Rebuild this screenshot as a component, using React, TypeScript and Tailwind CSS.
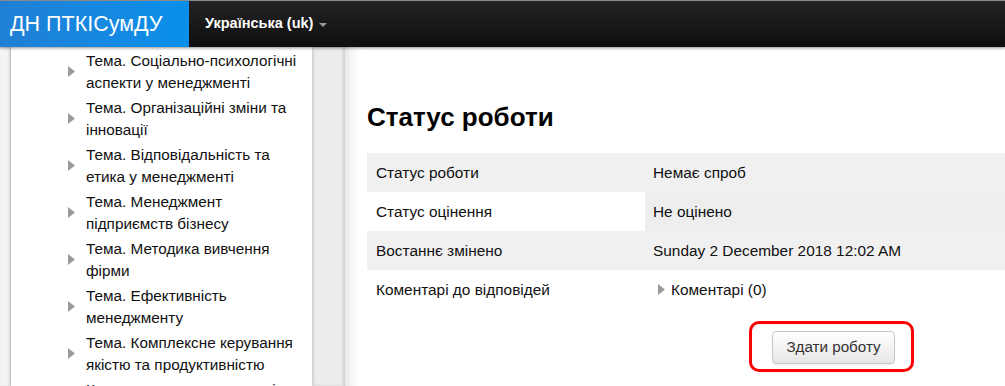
const topics = [
  ["Тема. Соціально-психологічні", "аспекти у менеджменті"],
  ["Тема. Організаційні зміни та", "інновації"],
  ["Тема. Відповідальність та", "етика у менеджменті"],
  ["Тема. Менеджмент", "підприємств бізнесу"],
  ["Тема. Методика вивчення", "фірми"],
  ["Тема. Ефективність", "менеджменту"],
  ["Тема. Комплексне керування", "якістю та продуктивністю"],
  ["Контроль знань з дисципліни", "менеджмент"],
];

// Small grey triangle used by the tree items
function Arrow() {
  return (
    <svg width="7" height="11" viewBox="0 0 7 11" className="shrink-0">
      <path d="M0 0 L7 5.5 L0 11 Z" fill="#9a9a9a" />
    </svg>
  );
}

const rows: { label: string; value: React.ReactNode; bg: string; valueBg: string }[] = [
  { label: "Статус роботи", value: "Немає спроб", bg: "bg-[#f0f0f0]", valueBg: "bg-[#f0f0f0]" },
  { label: "Статус оцінення", value: "Не оцінено", bg: "bg-white", valueBg: "bg-[#eeeeee]" },
  {
    label: "Востаннє змінено",
    value: "Sunday 2 December 2018 12:02 AM",
    bg: "bg-[#f0f0f0]",
    valueBg: "bg-[#f0f0f0]",
  },
  {
    label: "Коментарі до відповідей",
    value: (
      <span className="flex items-center gap-[6px] ml-[5px]">
        <Arrow />
        <span>Коментарі (0)</span>
      </span>
    ),
    bg: "bg-white",
    valueBg: "bg-white",
  },
];

export default function App() {
  return (
    <div className="relative w-[1005px] h-[386px] overflow-hidden bg-white text-[15.3px] text-[#111] font-['Liberation_Sans',Arial,sans-serif]">
      {/* Navbar */}
      <div className="relative z-10 flex h-[47px] border-t border-[#8a8a8a] bg-gradient-to-b from-[#232323] to-[#0f0f0f] shadow-[0_1px_3px_rgba(0,0,0,0.45)]">
        <div className="flex w-[189px] items-center bg-gradient-to-r from-[#1f7fd5] to-[#0790ea] pl-[10px] text-[21.5px] text-white">
          ДН ПТКІСумДУ
        </div>
        <div className="flex items-center pl-[16px] text-[14.5px] font-bold text-white">
          Українська (uk)
          <span className="ml-[6px] mt-[2px] h-0 w-0 border-x-[4px] border-t-[4px] border-x-transparent border-t-[#9a9a9a]" />
        </div>
      </div>

      {/* Body */}
      <div className="flex h-[339px]">
        <div className="w-[11px] shrink-0 bg-[#f4f4f4] shadow-[inset_-1px_0_2px_rgba(0,0,0,0.12)]" />

        {/* Sidebar */}
        <div className="relative w-[301px] shrink-0 bg-white pl-[57px] pt-[3px] shadow-[0_0_4px_rgba(0,0,0,0.28)]">
          <ul className="flex flex-col gap-[4px]">
            {topics.map(([a, b]) => (
              <li key={a} className="flex items-center gap-[11px]">
                <Arrow />
                <div className="leading-[21.5px] whitespace-nowrap">
                  <div>{a}</div>
                  <div>{b}</div>
                </div>
              </li>
            ))}
          </ul>
        </div>

        <div className="w-[33px] shrink-0 bg-[#ececec] shadow-[inset_-2px_0_3px_rgba(0,0,0,0.12)]" />

        {/* Main */}
        <div className="flex-1 bg-white pl-[22px] shadow-[inset_14px_0_12px_-10px_rgba(0,0,0,0.12)]">
          <h2 className="mt-[55px] text-[26px] font-bold leading-[30px] text-black">Статус роботи</h2>
          <div className="mt-[21px] text-[15.4px]">
            {rows.map((r) => (
              <div key={r.label} className={`flex h-[39px] items-center ${r.bg}`}>
                <div className="w-[278px] pl-[9px]">{r.label}</div>
                <div className={`flex h-full flex-1 items-center pl-[8px] ${r.valueBg}`}>{r.value}</div>
              </div>
            ))}
          </div>

          <div className="relative ml-[405px] mt-[22px] w-fit">
            <button className="h-[33px] w-[123px] rounded-[4px] border border-[#c8c8c8] bg-gradient-to-b from-white to-[#e6e6e6] text-[15.2px] text-[#333] shadow-[0_1px_1px_rgba(0,0,0,0.08)]">
              Здати роботу
            </button>
            <div className="pointer-events-none absolute -left-[23px] -top-[10px] h-[51px] w-[165px] rounded-[10px] border-[3px] border-[#ff0000]" />
          </div>
        </div>
      </div>
    </div>
  );
}
